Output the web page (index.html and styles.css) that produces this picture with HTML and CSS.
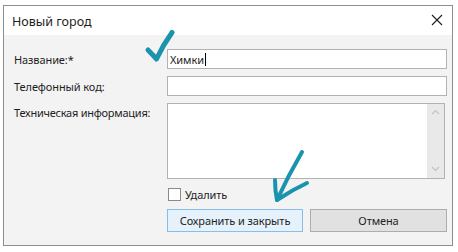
FILE: index.html
```html
<!DOCTYPE html>
<html lang="ru">
<head>
  <meta charset="UTF-8">
  <title>Новый город</title>
  <link rel="stylesheet" href="styles.css">
</head>
<body>
  <div class="dialog">
    <div class="titlebar">
      <span class="title">Новый город</span>
      <svg class="close" width="12" height="12" viewBox="0 0 12 12">
        <path d="M1 1 L11 11 M11 1 L1 11" stroke="#1e1e1e" stroke-width="1.1" fill="none"/>
      </svg>
    </div>
    <div class="form">
      <label class="label">Название:*</label>
      <div class="field"><span>Химки</span><span class="caret"></span></div>

      <label class="label">Телефонный код:</label>
      <div class="field"></div>

      <label class="label label-top">Техническая информация:</label>
      <div class="memo">
        <div class="memo-text"></div>
        <div class="scrollbar">
          <svg width="9" height="6" viewBox="0 0 9 6"><path d="M1 5 L4.5 1.5 L8 5" stroke="#c2c2c2" stroke-width="1.2" fill="none"/></svg>
          <svg width="9" height="6" viewBox="0 0 9 6"><path d="M1 1 L4.5 4.5 L8 1" stroke="#c2c2c2" stroke-width="1.2" fill="none"/></svg>
        </div>
      </div>

      <div></div>
      <label class="check"><span class="box"></span>Удалить</label>

      <div></div>
      <div class="buttons">
        <button class="btn btn-primary">Сохранить и закрыть</button>
        <button class="btn">Отмена</button>
      </div>
    </div>
  </div>

  <svg class="marks" width="458" height="252" viewBox="0 0 458 252">
    <path d="M148 50 Q152 54 156.5 59 Q163 45 172 32.5" stroke="#1b93ad" stroke-width="5" fill="none" stroke-linecap="round" stroke-linejoin="round"/>
    <path d="M302 152 Q288 176 277 200" stroke="#1b93ad" stroke-width="4" fill="none" stroke-linecap="round"/>
    <path d="M275 180 Q275 191 277 200 Q292 190 307 183" stroke="#1b93ad" stroke-width="4" fill="none" stroke-linecap="round" stroke-linejoin="round"/>
  </svg>
</body>
</html>
```

FILE: styles.css
```css
body {
  margin: 0;
  padding: 5px 0 0 3px;
  background: #fff;
  font-family: "Noto Sans", "Open Sans", sans-serif;
  font-size: 11px;
  letter-spacing: -0.1px;
  color: #1e1e1e;
}

.dialog {
  width: 448px;
  height: 239px;
  border: 1px solid #8e8e8e;
  background: #f3f3f3;
}

.titlebar {
  height: 29px;
  background: #fff;
  display: flex;
  align-items: center;
  justify-content: space-between;
  padding: 0 9px 0 8px;
}

.title {
  font-size: 12.5px;
  letter-spacing: 0;
  margin-top: 2px;
}

.close {
  margin-top: -1px;
}

.form {
  display: grid;
  grid-template-columns: 153px 280px;
  grid-template-rows: 20px 20px 76px 13px 22px;
  row-gap: 7px;
  padding: 14px 0 0 10px;
}

.label {
  align-self: center;
  white-space: nowrap;
  position: relative;
  z-index: 1;
}

.label-top {
  align-self: start;
  margin-top: 2px;
  letter-spacing: -0.25px;
}

.field {
  border: 1px solid #b2b2b2;
  background: #fff;
  display: flex;
  align-items: center;
  padding-left: 2px;
}

.caret {
  display: inline-block;
  width: 1px;
  height: 13px;
  background: #000;
  margin-left: 1px;
}

.memo {
  border: 1px solid #b2b2b2;
  background: #fff;
  display: flex;
  margin-right: 2px;
}

.memo-text {
  flex: 1;
}

.scrollbar {
  width: 17px;
  background: #e9e9e9;
  display: flex;
  flex-direction: column;
  justify-content: space-between;
  align-items: center;
  padding: 5px 0 6px;
}

.check {
  display: flex;
  align-items: center;
  gap: 4px;
  margin-top: 3px;
  margin-left: 1px;
}

.box {
  width: 11px;
  height: 11px;
  background: #fff;
  border: 1px solid #8a8a8a;
}

.buttons {
  display: grid;
  grid-template-columns: 136px 137px;
  column-gap: 7px;
  margin-top: 3px;
}

.btn {
  font-family: inherit;
  font-size: 11px;
  letter-spacing: -0.1px;
  color: #1e1e1e;
  background: #e1e1e1;
  border: 1px solid #adadad;
  padding: 0;
  height: 23px;
}

.btn-primary {
  background: #e5f1fb;
  border-color: #88bfe9;
}

.marks {
  position: absolute;
  left: 0;
  top: 0;
  pointer-events: none;
}
```
